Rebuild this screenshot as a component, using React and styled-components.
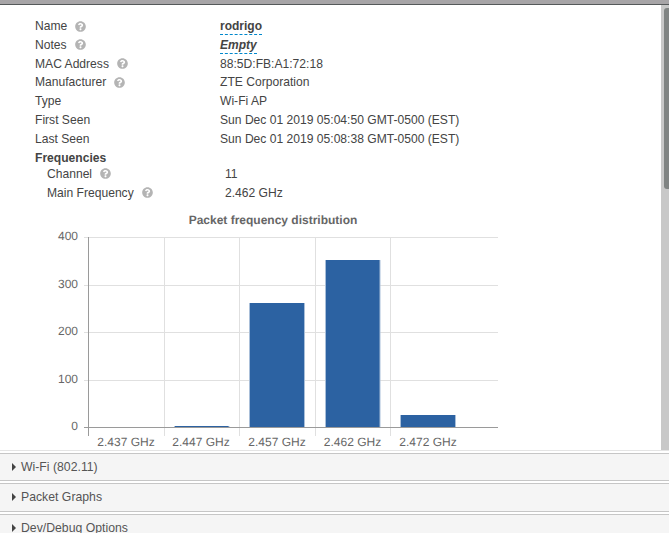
import React from 'react';
import styled, { createGlobalStyle } from 'styled-components';
import { FaQuestionCircle } from 'react-icons/fa';

const GlobalStyle = createGlobalStyle`
  html, body {
    margin: 0;
    padding: 0;
    height: 100%;
    overflow: hidden;
    background: #fff;
    font-family: "Liberation Sans", Arial, sans-serif;
    font-size: 12.1px;
    color: #444;
  }
`;

const DETAILS = [
  { label: 'Name', value: 'rodrigo', help: true, editable: 'name' },
  { label: 'Notes', value: 'Empty', help: true, editable: 'notes' },
  { label: 'MAC Address', value: '88:5D:FB:A1:72:18', help: true },
  { label: 'Manufacturer', value: 'ZTE Corporation', help: true },
  { label: 'Type', value: 'Wi-Fi AP' },
  { label: 'First Seen', value: 'Sun Dec 01 2019 05:04:50 GMT-0500 (EST)' },
  { label: 'Last Seen', value: 'Sun Dec 01 2019 05:08:38 GMT-0500 (EST)' },
];

const FREQUENCIES = [
  { label: 'Channel', value: '11', help: true },
  { label: 'Main Frequency', value: '2.462 GHz', help: true },
];

const Y_TICKS = [
  { label: '400', y: 237.5 },
  { label: '300', y: 285.5 },
  { label: '200', y: 332.5 },
  { label: '100', y: 380.5 },
  { label: '0', y: 427.5 },
];

const X_GRID = [164.5, 239.5, 315.5, 390.5];

const BARS = [
  { label: '2.437 GHz', center: 126 },
  { label: '2.447 GHz', center: 201, x: 174.5, w: 54.5, top: 426 },
  { label: '2.457 GHz', center: 277, x: 249.5, w: 55, top: 303 },
  { label: '2.462 GHz', center: 352.5, x: 325.5, w: 54.5, top: 260 },
  { label: '2.472 GHz', center: 428, x: 400.5, w: 55, top: 415 },
];

const SECTIONS = ['Wi-Fi (802.11)', 'Packet Graphs', 'Dev/Debug Options'];

function PacketChart() {
  return (
    <ChartSvg width="500" height="240" viewBox="0 208 500 240">
      <ChartTitle x="273" y="223.5" textAnchor="middle">Packet frequency distribution</ChartTitle>

      {Y_TICKS.slice(0, 4).map(t => (
        <GridLine key={t.label} x1="84" x2="498" y1={t.y} y2={t.y} />
      ))}
      {X_GRID.map(x => (
        <GridLine key={x} x1={x} x2={x} y1="237" y2="436" />
      ))}

      {BARS.filter(b => b.x).map(b => (
        <g key={b.label}>
          <Bar x={b.x} y={b.top} width={b.w} height={427 - b.top} />
          <BarEdge x1={b.x} x2={b.x} y1={b.top} y2="427" />
          <BarEdge x1={b.x + b.w} x2={b.x + b.w} y1={b.top} y2="427" />
        </g>
      ))}

      <AxisLine x1="88.5" x2="88.5" y1="237" y2="436" />
      <AxisLine x1="84" x2="498" y1="427.5" y2="427.5" />

      {Y_TICKS.map(t => (
        <TickLabel key={t.label} x="78" y={t.y + 2.5} textAnchor="end">{t.label}</TickLabel>
      ))}
      {BARS.map(b => (
        <TickLabel key={b.label} x={b.center} y="446" textAnchor="middle">{b.label}</TickLabel>
      ))}
    </ChartSvg>
  );
}

function DetailRow({ row, nested }) {
  return (
    <Row $nested={nested}>
      <Label $nested={nested}>
        {row.label}
        {row.help && <HelpIcon />}
      </Label>
      {row.editable ? (
        <Editable $italic={row.editable === 'notes'}>{row.value}</Editable>
      ) : (
        <span>{row.value}</span>
      )}
    </Row>
  );
}

export default function App() {
  return (
    <Page>
      <GlobalStyle />
      <TopBar />
      <Body>
        <Main>
          {DETAILS.map(row => <DetailRow key={row.label} row={row} />)}
          <GroupHeading>Frequencies</GroupHeading>
          {FREQUENCIES.map(row => <DetailRow key={row.label} row={row} nested />)}
          <PacketChart />
        </Main>
        <ScrollTrack>
          <ScrollThumb />
        </ScrollTrack>
      </Body>
      <Sections>
        {SECTIONS.map(title => (
          <Section key={title}>
            <Caret />
            {title}
          </Section>
        ))}
      </Sections>
    </Page>
  );
}

const Page = styled.div`
  display: flex;
  flex-direction: column;
  width: 669px;
  height: 533px;
  overflow: hidden;
`;

const TopBar = styled.div`
  flex: none;
  height: 4px;
  background: #a7a5a7;
  border-bottom: 1px solid #55595a;
`;

const Body = styled.div`
  flex: none;
  display: flex;
  height: 445px;
`;

const Main = styled.div`
  flex: 1;
  min-width: 0;
  padding: 12px 0 0 35px;
  overflow: hidden;
`;

const Row = styled.div`
  display: flex;
  height: ${p => (p.$nested ? '19px' : '18.8px')};
  line-height: 18px;
  padding-left: ${p => (p.$nested ? '12px' : '0')};
`;

const Label = styled.div`
  display: flex;
  align-items: center;
  flex: none;
  width: ${p => (p.$nested ? '178px' : '185px')};
  height: 18px;
`;

const HelpIcon = styled(FaQuestionCircle)`
  width: 11px;
  height: 11px;
  margin-left: 8px;
  color: #b4b4b4;
`;

const Editable = styled.span`
  align-self: flex-start;
  height: 17px;
  font-size: 12px;
  font-weight: bold;
  font-style: ${p => (p.$italic ? 'italic' : 'normal')};
  border-bottom: 1px dashed #08c;
`;

const GroupHeading = styled.div`
  height: 16px;
  line-height: 18px;
  font-weight: bold;
`;

const ChartSvg = styled.svg`
  display: block;
  margin: 5.4px 0 0 -35px;
`;

const ChartTitle = styled.text`
  font-family: "Liberation Sans", Arial, sans-serif;
  font-size: 12px;
  font-weight: bold;
  fill: #666;
  text-rendering: geometricPrecision;
`;

const TickLabel = styled.text`
  font-family: "Liberation Sans", Arial, sans-serif;
  font-size: 12px;
  fill: #666;
  text-rendering: geometricPrecision;
`;

const GridLine = styled.line`
  stroke: #e0e0e0;
  stroke-width: 1;
`;

const AxisLine = styled.line`
  stroke: #9a9a9a;
  stroke-width: 1;
`;

const Bar = styled.rect`
  fill: #2c62a2;
`;

const BarEdge = styled.line`
  stroke: #a9bfd9;
  stroke-width: 1;
`;

const ScrollTrack = styled.div`
  flex: none;
  width: 8px;
  padding: 3px 0 0 3px;
  box-sizing: border-box;
  background: #c8c8c8;
`;

const ScrollThumb = styled.div`
  height: 181px;
  background: #808483;
  border-radius: 3px 0 0 3px;
`;

const Sections = styled.div`
  flex: 1;
  border-top: 1px solid #e4e4e4;
  padding-top: 2px;
`;

const Section = styled.div`
  display: flex;
  align-items: center;
  height: 26.3px;
  margin-bottom: 2px;
  padding-left: 12px;
  background: #f5f5f5;
  border-top: 1px solid #c6c6c6;
  border-bottom: 1px solid #c6c6c6;
  color: #555;
  font-size: 12.25px;
`;

const Caret = styled.span`
  width: 0;
  height: 0;
  margin-right: 5px;
  border-top: 4px solid transparent;
  border-bottom: 4px solid transparent;
  border-left: 4px solid #444;
`;
